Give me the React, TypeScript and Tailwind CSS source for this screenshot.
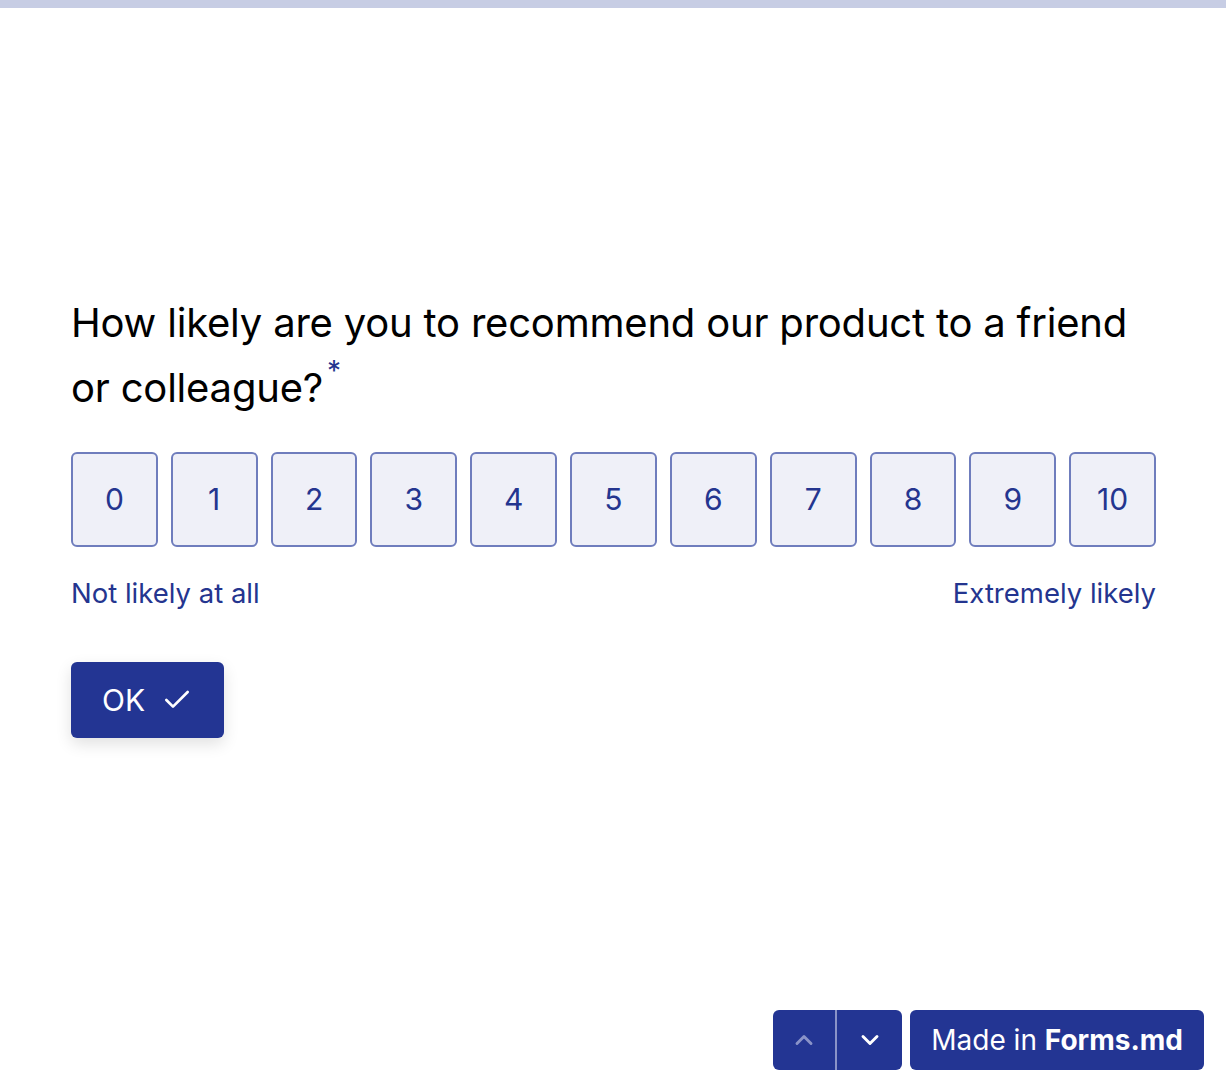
import { Check, ChevronUp, ChevronDown } from 'lucide-react';

const scores = [0, 1, 2, 3, 4, 5, 6, 7, 8, 9, 10];

export default function App() {
    return (
        <div className="h-[1092px] flex flex-col bg-white font-['Inter',sans-serif] overflow-hidden">
            <div className="h-2 bg-[#c7cde4]" />

            <main className="flex-1 px-[71px] pt-[282px]">
                <h1 className="text-[40px] leading-[65px] text-black tracking-[-0.2px] max-w-[1085px]">
                    How likely are you to recommend our product to a friend or colleague?
                    <span className="inline-block align-top leading-none text-[#24358f] text-[28px] ml-[4px] mt-[2px]">*</span>
                </h1>

                <div className="mt-[32px] grid grid-cols-11 gap-[13px] w-[1085px]">
                    {scores.map((n) => (
                        <button
                            key={n}
                            className="h-[95px] rounded-[6px] border-2 border-[#6f7dbd] bg-[#eff0f8] text-[#24358f] text-[30px] flex items-center justify-center"
                        >
                            {n}
                        </button>
                    ))}
                </div>

                <div className="mt-[26px] flex justify-between w-[1085px] text-[27.5px] leading-[41px] text-[#24358f]">
                    <span>Not likely at all</span>
                    <span>Extremely likely</span>
                </div>

                <button className="mt-[48px] h-[76px] w-[153px] rounded-[6px] bg-[#233593] text-white text-[30px] flex items-center justify-center gap-4 shadow-[0_6px_16px_rgba(0,0,0,0.12)]">
                    OK <Check className="w-8 h-8" strokeWidth={2} />
                </button>
            </main>

            <div className="flex justify-end gap-2 px-[22px] pb-[22px]">
                <div className="flex h-[60px] rounded-[6px] bg-[#233593] overflow-hidden">
                    <button className="w-[64px] flex items-center justify-center text-[#8a93c8] border-r-2 border-[#8a93c8]">
                        <ChevronUp className="w-7 h-7" strokeWidth={2.5} />
                    </button>
                    <button className="w-[65px] flex items-center justify-center text-white">
                        <ChevronDown className="w-7 h-7" strokeWidth={2.5} />
                    </button>
                </div>
                <button className="h-[60px] px-[21px] rounded-[6px] bg-[#233593] text-white text-[28px]">
                    Made in <span className="font-bold">Forms.md</span>
                </button>
            </div>
        </div>
    );
}
